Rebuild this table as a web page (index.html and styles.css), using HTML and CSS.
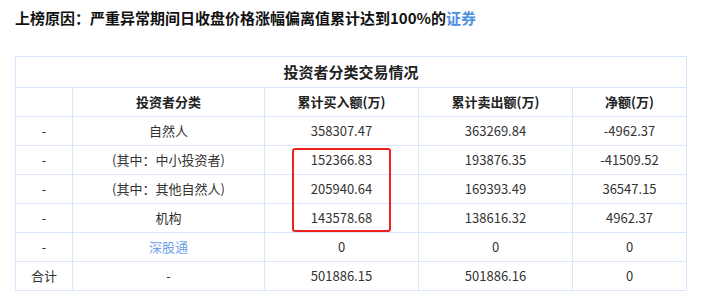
FILE: index.html
```html
<!DOCTYPE html>
<html lang="zh">
<head>
<meta charset="utf-8">
<link rel="stylesheet" href="styles.css">
</head>
<body>
<div class="page">
  <h1 class="reason">上榜原因：严重异常期间日收盘价格涨幅偏离值累计达到100%的<a class="link">证券</a></h1>
  <div class="table-wrap">
    <table class="trade">
      <colgroup>
        <col class="c1"><col class="c2"><col class="c3"><col class="c4"><col class="c5">
      </colgroup>
      <thead>
        <tr class="title-row"><th colspan="5">投资者分类交易情况</th></tr>
        <tr class="head-row"><th></th><th>投资者分类</th><th>累计买入额(万)</th><th>累计卖出额(万)</th><th>净额(万)</th></tr>
      </thead>
      <tbody>
        <tr><td>-</td><td>自然人</td><td>358307.47</td><td>363269.84</td><td>-4962.37</td></tr>
        <tr><td>-</td><td>(其中：中小投资者)</td><td>152366.83</td><td>193876.35</td><td>-41509.52</td></tr>
        <tr><td>-</td><td>(其中：其他自然人)</td><td>205940.64</td><td>169393.49</td><td>36547.15</td></tr>
        <tr><td>-</td><td>机构</td><td>143578.68</td><td>138616.32</td><td>4962.37</td></tr>
        <tr><td>-</td><td><a class="link light">深股通</a></td><td>0</td><td>0</td><td>0</td></tr>
        <tr><td>合计</td><td>-</td><td>501886.15</td><td>501886.16</td><td>0</td></tr>
      </tbody>
    </table>
    <div class="highlight"></div>
  </div>
</div>
</body>
</html>
```
FILE: styles.css
```css
html, body {
  margin: 0;
  padding: 0;
  background: #ffffff;
}
body {
  font-family: "Noto Sans CJK SC", "Noto Sans", sans-serif;
  color: #333333;
}
.page {
  padding: 8px 0 0 15px;
}
.reason {
  margin: 0;
  font-size: 15px;
  line-height: 20px;
  font-weight: bold;
  color: #111111;
}
.link {
  color: #4f8fe0;
  text-decoration: none;
}
.link.light {
  color: #6e9fe6;
}
.table-wrap {
  position: relative;
  margin-top: 28px;
  width: 671px;
}
.trade {
  border-collapse: collapse;
  table-layout: fixed;
  width: 671px;
  font-size: 13px;
}
.c1 { width: 57px; }
.c2 { width: 192px; }
.c3 { width: 154px; }
.c4 { width: 154px; }
.c5 { width: 114px; }
.trade th, .trade td {
  border: 1px solid #d9e6fb;
  text-align: center;
  padding: 0;
  height: 28px;
  line-height: 18px;
}
.trade th {
  color: #222222;
  font-weight: bold;
}
.title-row th {
  height: 30px;
  font-size: 15px;
}
.trade td {
  color: #333333;
}
.highlight {
  position: absolute;
  left: 277px;
  top: 92px;
  width: 95px;
  height: 80px;
  border: 2px solid #f0201d;
  border-radius: 3px;
}
```
